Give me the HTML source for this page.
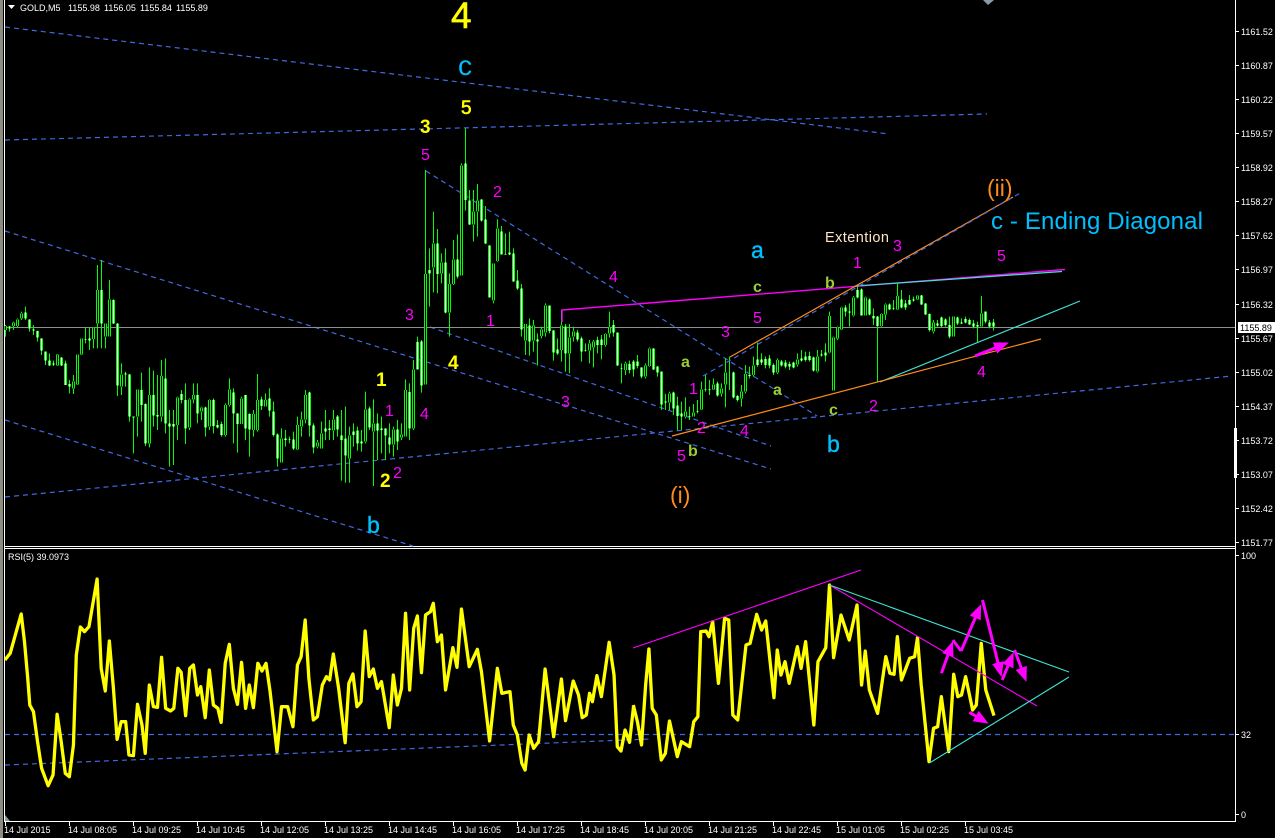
<!DOCTYPE html>
<html><head><meta charset="utf-8"><title>GOLD,M5</title>
<style>
html,body{margin:0;padding:0;background:#000;width:1275px;height:838px;overflow:hidden}
svg{display:block;position:absolute;left:0;top:0}
text{font-family:"Liberation Sans",sans-serif}
.a{font-size:9px;fill:#fff}
.m text{font-size:16px;fill:#f0f}
.y text{font-size:19px;font-weight:bold;fill:#ff0}
.o text{font-size:16px;font-weight:bold;fill:#9acd32}
.c text{font-size:23px;fill:#00bfff;stroke:#00bfff;stroke-width:.4}
.w{fill:none;stroke:#0f0;stroke-width:1}
.b3{fill:none;stroke-width:3}
.b1{fill:none;stroke-width:1}
</style></head><body>
<svg width="1275" height="838" viewBox="0 0 1275 838" xmlns="http://www.w3.org/2000/svg">
<defs>
<marker id="h" markerWidth="5" markerHeight="4" refX="3.6" refY="2" orient="auto"><path d="M0 0L5 2L0 4z" fill="#f0f"/></marker>
<path id="w1" d="M9 260V266M25 217V235M29 238V265M33 268V272M37 273V293M41 295V332M45 335V362M49 362V376M53 370V374M61 352V376M65 370V435M69 432V440M85 297V299M89 295V302M101 150V250M113 180V250M117 250V437M125 400V403M129 403V530M133 530V532M141 450V495M145 492V610M153 465V527M157 525V530M165 415V550M169 550V560M173 552V560M181 462V480M185 480V565M197 465V520M205 502V562M213 480V558M217 555V562M221 552V585M233 457V520M237 520V552M245 465V565M249 522V568M261 478V498M269 475V512M273 515V585M277 583V655M285 595V600M289 598V600M293 598V626M309 457V556M313 556V622M325 565V575M329 565V570M337 530V568M341 586V600M345 596V646M353 575V585M357 572V610M361 604V610M369 505V562M377 550V572M381 565V570M385 565V586M389 592V614M397 568V605M409 456V565M417 306V388M421 304V436"/>
<path id="b1" d="M5 258V270M13 248V258M17 238V258M21 220V235M57 344V376M73 424V445M77 343V433M81 295V343M93 263V297M97 150V250M105 250V290M109 178V290M121 403V440M137 448V530M149 465V610M161 408V530M177 472V555M189 478V563M193 465V478M201 502V515M209 480V560M225 495V585M229 448V495M241 475V552M253 522V570M257 480V570M265 480V500M281 595V668M297 555V628M301 538V560M305 465V538M317 607V620M321 580V625M333 538V572M349 586V655M365 508V605M373 550V575M393 568V614M401 584V592M405 450V590M413 388V565"/>
<path id="w2" d="M429 450V460M437 370V462M445 427V578M457 418V470M465 130V240M469 242V313M481 238V302M485 298V370M489 376V532M501 334V403M505 402V404M509 398V404M513 400V485M517 482V505M521 505V628M529 617V665M537 658V664M549 557V633M553 632V697M557 688V700M565 620V700M577 638V658M581 655V695M585 690V692M597 660V675M601 658V675M613 615V638M617 638V737M621 745V747M629 732V750M633 725V748M637 725V738M641 742V770M653 685V748M657 740V757M661 755V853M665 845V848M673 818V865M677 857V888M681 880V890M689 888V890M697 873V875M705 808V810M709 808V810M717 790V826M729 757V758M733 757V832M737 828V838"/>
<path id="b2" d="M425 462V793M433 370V443M441 427V460M449 492V578M453 418V492M461 136V467M473 275V314M477 242V275M493 430V542M497 325V423M525 612V662M533 617V662M541 628V648M545 556V638M561 616V690M569 652V700M573 634V650M589 670V692M593 665V682M605 642V675M609 622V640M625 730V750M645 737V770M649 685V738M669 820V848M685 875V890M693 878V890M701 808V868M713 793V808M721 805V820M725 757V793"/>
<path id="w3" d="M737 680V690M749 615V618M757 568V585M761 568V578M765 567V585M769 565V586M773 585V608M781 575V586M785 578V590M789 582V590M793 578V592M801 565V572M805 560V570M809 558V570M813 562V602M821 553V556M825 548V556M845 412V425M849 425V428M857 360V382M861 358V436M869 388V434M873 438V445M877 440V468M889 403V418M893 415V417M901 388V412M905 400V412M909 390V403M913 388V392M921 376V403M925 400V433M929 432V480M937 460V467M941 442V468M945 448V465M949 465V500M957 442V460M961 457V460M965 447V458M969 450V463M973 460V470M977 465V470M985 425V455M989 457V470M993 457V470"/>
<path id="b3" d="M741 665V685M745 612V665M753 586V615M777 570V608M797 568V584M817 560V605M829 438V548M833 502V662M837 472V505M841 412V478M853 382V437M865 382V436M881 432V468M885 403V433M897 378V418M917 376V388M933 458V485M953 440V500M981 430V470"/>
</defs>

<!-- frame -->
<rect x="0" y="0" width="3" height="838" fill="#8c8c80"/>
<g shape-rendering="crispEdges">
<rect x="4" y="0" width="1" height="822" fill="#fff"/>
<rect x="4" y="546" width="1231" height="1" fill="#fff"/>
<rect x="4" y="548" width="1231" height="1" fill="#fff"/>
<rect x="4" y="821" width="1232" height="1" fill="#fff"/>
<rect x="1235" y="0" width="1" height="822" fill="#fff"/>
<rect x="1234" y="428" width="3" height="50" fill="#fff"/>
<path d="M1236 31.5h3M1236 65.5h3M1236 99.5h3M1236 133.5h3M1236 167.5h3M1236 201.5h3M1236 235.5h3M1236 269.5h3M1236 304.5h3M1236 338.5h3M1236 372.5h3M1236 406.5h3M1236 440.5h3M1236 474.5h3M1236 508.5h3M1236 542.5h3M1236 555.5h3M1236 734.5h3M1236 814.5h3" stroke="#fff" fill="none"/>
<path d="M5.5 822v4M69.5 822v4M133.5 822v4M197.5 822v4M261.5 822v4M325.5 822v4M389.5 822v4M453.5 822v4M517.5 822v4M581.5 822v4M645.5 822v4M709.5 822v4M773.5 822v4M837.5 822v4M901.5 822v4M965.5 822v4" stroke="#fff" fill="none"/>
</g>
<path d="M5 815L10 821H5z" fill="#8a9aa0"/>
<path d="M983 0L988 5L994 0z" fill="#8a9aa8"/>

<!-- blue trend lines -->
<g fill="none" stroke="#4169e1" stroke-width="1.2" stroke-dasharray="5 4">
<path d="M5 27L889 134"/>
<path d="M5 140L987 114"/>
<path d="M5 231L771 469"/>
<path d="M5 420L413 546"/>
<path d="M5 497L1232 376"/>
<path d="M430 327L771 446"/>
<path d="M426 171L817 416"/>
</g>

<!-- bid line -->
<rect x="5" y="327" width="1230" height="1" fill="#8f8f8f" shape-rendering="crispEdges"/>

<!-- candles -->
<g shape-rendering="crispEdges">
<g transform="translate(.5,240) scale(1,.33333)">
<path class="w" d="M5 255V290M9 258V275M13 245V270M17 235V262M21 215V240M25 200V240M29 238V275M33 255V285M37 272V305M41 295V345M45 335V375M49 340V378M53 362V378M57 342V378M61 352V378M65 362V435M69 420V460M73 405V462M77 345V435M81 295V345M85 263V310M89 262V330M93 262V325M97 75V325M101 60V325M105 250V325M109 120V290M113 178V252M117 250V468M121 370V465M125 395V440M129 402V545M133 530V640M137 448V590M141 398V545M145 490V618M149 382V622M153 392V560M157 405V570M161 360V545M165 355V580M169 510V680M173 510V675M177 470V600M181 450V490M185 430V612M189 475V570M193 430V490M197 430V550M201 500V540M205 500V590M209 478V570M213 475V580M217 540V565M221 545V590M225 490V590M229 415V500M233 445V610M237 520V638M241 470V550M245 465V600M249 520V650M253 510V590M257 402V575M261 470V510M265 460V500M269 445V530M273 485V590M277 580V680M281 565V668M285 570V620M289 590V610M293 575V630M297 530V630M301 515V590M305 450V550M309 455V590M313 550V640M317 600V625M321 545V625M325 510V600M329 540V600M333 510V600M337 525V590M341 510V722M345 500V728M349 560V728M353 550V620M357 560V632M361 570V635M365 455V610M369 500V570M373 478V738M377 520V660M381 530V640M385 565V660M389 550V640M393 560V650M397 540V630M401 550V600M405 418V590M409 430V600M413 360V570M417 290V375M421 300V458"/>
<use href="#w1" class="b3" stroke="#0f0"/><use href="#b1" class="b3" stroke="#0f0"/>
<use href="#w1" class="b1" stroke="#fff"/><use href="#b1" class="b1" stroke="#000"/>
</g>
<g transform="translate(.5,120) scale(1,.33333)">
<path class="w" d="M425 150V793M429 385V560M433 275V517M437 327V520M441 400V490M445 385V580M449 460V650M453 360V495M457 343V475M461 130V467M465 25V272M469 210V315M473 210V365M477 192V350M481 238V305M485 258V372M489 376V532M493 430V550M497 298V425M501 318V403M505 340V404M509 335V405M513 385V485M517 450V510M521 492V650M525 612V705M529 595V707M533 600V695M537 640V737M541 620V655M545 550V650M549 557V640M553 630V722M557 655V705M561 570V725M565 612V755M569 612V760M573 620V665M577 630V665M581 650V725M585 670V695M589 660V730M593 660V742M597 650V700M601 645V718M605 640V680M609 575V653M613 600V650M617 638V737M621 730V790M625 725V765M629 722V760M633 720V770M637 705V745M641 742V775M645 730V775M649 682V740M653 685V750M657 738V770M661 755V870M665 822V870M669 815V870M673 815V885M677 830V930M681 845V930M685 832V895M689 860V900M693 852V890M697 840V880M701 785V870M705 762V815M709 780V825M713 775V810M717 785V830M721 790V830M725 715V862M729 710V810M733 755V835M737 825V845"/>
<use href="#w2" class="b3" stroke="#0f0"/><use href="#b2" class="b3" stroke="#0f0"/>
<use href="#w2" class="b1" stroke="#fff"/><use href="#b2" class="b1" stroke="#000"/>
</g>
<g transform="translate(.5,170) scale(1,.33333)">
<path class="w" d="M741 645V710M745 585V670M749 590V625M753 560V620M757 518V590M761 550V585M765 560V595M769 555V595M773 580V615M777 565V612M781 570V590M785 570V595M789 575V600M793 575V595M797 550V590M801 540V575M805 545V575M809 545V575M813 560V605M817 540V608M821 540V560M825 520V575M829 425V550M833 500V662M837 470V510M841 410V480M845 405V440M849 400V470M853 378V440M857 345V385M861 355V436M865 380V436M869 385V436M873 415V465M877 438V635M881 430V470M885 400V450M889 400V420M893 390V420M897 340V420M901 360V415M905 390V420M909 375V405M913 380V395M917 375V390M921 375V405M925 400V435M929 430V485M933 450V490M937 450V470M941 440V472M945 445V470M949 440V505M953 440V500M957 440V465M961 445V462M965 440V460M969 445V465M973 450V475M977 455V518M981 378V472M985 425V460M989 450V475M993 447V482"/>
<use href="#w3" class="b3" stroke="#0f0"/><use href="#b3" class="b3" stroke="#0f0"/>
<use href="#w3" class="b1" stroke="#fff"/><use href="#b3" class="b1" stroke="#000"/>
</g>
</g>

<!-- main chart overlays -->
<g fill="none" stroke-width="1.2">
<path d="M562 322V310L1065 269.5" stroke="#f0f" stroke-width="1.4"/>
<path d="M855 286L1062 271.5" stroke="#40e0d0"/>
<path d="M880 382L1080 301" stroke="#40e0d0"/>
<path d="M672 436L1041 339" stroke="#ff8c1a"/>
<path d="M730 357L1013 197" stroke="#ff8c1a"/>
<path d="M703 376L1022 192" stroke="#4169e1" stroke-dasharray="5 4"/>
<path d="M975 356L1005 344" stroke="#f0f" stroke-width="3" marker-end="url(#h)"/>
</g>

<!-- RSI -->
<g fill="none" stroke-width="1.2">
<path d="M5 734.5H1235" stroke="#4169e1" stroke-dasharray="5 4"/>
<path d="M5 765L650 739" stroke="#4169e1" stroke-dasharray="5 4"/>
</g>
<g fill="none" stroke="#ff0" stroke-linejoin="round">
<polyline vector-effect="non-scaling-stroke" stroke-width="3.3" transform="translate(0,545) scale(.408,.33333)" points="12,345 25,325 38,268 52,207 60,290 68,400 73,480 82,500 92,590 102,670 118,722 130,690 140,508 150,590 160,685 170,695 180,600 187,330 197,246 207,260 218,245 238,102 248,370 258,438 268,288 278,430 287,583 297,530 308,530 316,630 327,632 337,478 348,540 356,625 366,420 376,485 386,487 396,337 406,490 418,498 426,490 436,370 444,382 455,512 465,370 474,360 484,450 492,425 503,518 513,375 523,480 534,490 542,532 552,355 562,298 572,430 582,478 592,352 602,490 611,420 621,488 632,355 642,378 652,355 662,440 679,620 690,485 705,485 718,545 729,360 738,335 748,225 757,400 768,525 778,515 790,420 800,395 808,405 817,327 830,430 846,593 855,415 865,387 875,485 885,470 895,258 905,395 915,372 925,430 935,410 954,548 964,390 974,480 984,430 994,205 1004,435 1014,250 1023,213 1033,383 1043,210 1055,200 1062,175 1072,290 1082,270 1092,435 1110,308 1120,367 1131,192 1150,365 1170,313 1180,380 1200,588 1219,370 1230,445 1250,440 1258,540 1268,570 1279,655 1287,675 1297,570 1308,610 1320,590 1336,372 1357,575 1376,402 1386,527 1405,408 1418,450 1427,518 1437,510 1445,445 1452,470 1463,392 1474,455 1493,292 1505,390 1513,605 1522,618 1532,555 1543,592 1553,482"/>
<polyline vector-effect="non-scaling-stroke" stroke-width="3.3" transform="translate(630,545) scale(.4113,.33333)" points="8,480 18,530 28,600 38,420 46,312 54,490 64,510 76,645 86,625 96,528 115,635 125,590 145,605 155,530 165,515 172,260 185,258 192,275 201,230 215,415 230,220 240,225 250,510 262,525 282,300 292,295 308,208 320,255 330,228 350,458 358,315 367,390 377,350 387,415 407,305 416,370 427,290 447,540 457,350 476,308 485,120 495,338 513,210 533,285 552,180 563,420 572,318 582,435 602,505 622,335 632,385 642,388 650,275 660,405 680,340 692,335 699,278 708,420 727,650 738,550 748,545 757,455 775,620 787,388 797,455 806,450 816,395 833,495 842,480 854,295 865,435 885,512"/>
</g>
<g fill="none" stroke-width="1.1">
<path d="M633 648L861 570" stroke="#f0f"/>
<path d="M829.5 585L1037 706" stroke="#f0f"/>
<path d="M829.5 585L1069 672" stroke="#40e0d0"/>
<path d="M929.5 763L1069 677" stroke="#40e0d0"/>
</g>
<g fill="none" stroke="#f0f" stroke-width="3">
<path d="M941.4 673.3L951.5 645" marker-end="url(#h)"/>
<path d="M952.9 640L961.1 651"/>
<path d="M961.1 651L979.5 608" marker-end="url(#h)"/>
<path d="M982.5 600L1000.5 673" marker-end="url(#h)"/>
<path d="M1002.2 680L1012 656" marker-end="url(#h)"/>
<path d="M1014.6 650L1025 678" marker-end="url(#h)"/>
<path d="M969.3 712.3L985 721.5" marker-end="url(#h)"/>
</g>

<!-- header -->
<path d="M8 5H15L11.5 9z" fill="#fff"/>
<text class="a" x="20" y="11">GOLD,M5</text>
<text class="a" x="68" y="11">1155.98</text>
<text class="a" x="104" y="11">1156.05</text>
<text class="a" x="140" y="11">1155.84</text>
<text class="a" x="176" y="11">1155.89</text>
<text class="a" x="8" y="560">RSI(5) 39.0973</text>

<!-- price axis -->
<g class="a">
<text class="a" x="1241" y="35">1161.52</text>
<text class="a" x="1241" y="69">1160.87</text>
<text class="a" x="1241" y="103">1160.22</text>
<text class="a" x="1241" y="137">1159.57</text>
<text class="a" x="1241" y="171">1158.92</text>
<text class="a" x="1241" y="205">1158.27</text>
<text class="a" x="1241" y="239">1157.62</text>
<text class="a" x="1241" y="273">1156.97</text>
<text class="a" x="1241" y="308">1156.32</text>
<text class="a" x="1241" y="342">1155.67</text>
<text class="a" x="1241" y="376">1155.02</text>
<text class="a" x="1241" y="410">1154.37</text>
<text class="a" x="1241" y="444">1153.72</text>
<text class="a" x="1241" y="478">1153.07</text>
<text class="a" x="1241" y="512">1152.42</text>
<text class="a" x="1241" y="546">1151.77</text>
<text class="a" x="1241" y="559">100</text>
<text class="a" x="1241" y="738">32</text>
<text class="a" x="1241" y="818">0</text>
</g>
<rect x="1238" y="322" width="37" height="11" fill="#fff"/>
<text x="1240" y="331" font-size="9" fill="#000">1155.89</text>

<!-- time axis -->
<g>
<text class="a" x="4" y="833">14 Jul 2015</text>
<text class="a" x="68" y="833">14 Jul 08:05</text>
<text class="a" x="132" y="833">14 Jul 09:25</text>
<text class="a" x="196" y="833">14 Jul 10:45</text>
<text class="a" x="260" y="833">14 Jul 12:05</text>
<text class="a" x="324" y="833">14 Jul 13:25</text>
<text class="a" x="388" y="833">14 Jul 14:45</text>
<text class="a" x="452" y="833">14 Jul 16:05</text>
<text class="a" x="516" y="833">14 Jul 17:25</text>
<text class="a" x="580" y="833">14 Jul 18:45</text>
<text class="a" x="644" y="833">14 Jul 20:05</text>
<text class="a" x="708" y="833">14 Jul 21:25</text>
<text class="a" x="772" y="833">14 Jul 22:45</text>
<text class="a" x="836" y="833">15 Jul 01:05</text>
<text class="a" x="900" y="833">15 Jul 02:25</text>
<text class="a" x="964" y="833">15 Jul 03:45</text>
</g>

<!-- labels -->
<text x="451" y="28" font-size="37" fill="#ff0" stroke="#ff0" stroke-width=".6">4</text>
<g class="y">
<text x="461" y="114" font-weight="normal" style="font-weight:normal" stroke="#ff0" stroke-width=".6">5</text>
<text x="420" y="133">3</text>
<text x="376" y="386">1</text>
<text x="380" y="487">2</text>
<text x="448" y="369">4</text>
</g>
<text x="458" y="75" font-size="28" fill="#00bfff">c</text>
<g class="c">
<text x="751" y="258">a</text>
<text x="827" y="452">b</text>
<text x="367" y="533">b</text>
</g>
<text x="991" y="229" font-size="24" fill="#00bfff" textLength="212">c - Ending Diagonal</text>
<text x="987" y="196" font-size="23" fill="#ff8c1a">(ii)</text>
<text x="670" y="503" font-size="23" fill="#ff8c1a">(i)</text>
<text x="825" y="242" font-size="14.5" fill="#ffe4c4" textLength="64">Extention</text>
<g class="m">
<text x="421" y="160">5</text>
<text x="493" y="197">2</text>
<text x="609" y="282">4</text>
<text x="486" y="326">1</text>
<text x="405" y="320">3</text>
<text x="385" y="416">1</text>
<text x="393" y="478">2</text>
<text x="420" y="419">4</text>
<text x="561" y="407">3</text>
<text x="721" y="337">3</text>
<text x="689" y="394">1</text>
<text x="697" y="433">2</text>
<text x="677" y="461">5</text>
<text x="740" y="436">4</text>
<text x="753" y="323">5</text>
<text x="853" y="268">1</text>
<text x="893" y="251">3</text>
<text x="997" y="261">5</text>
<text x="869" y="411">2</text>
<text x="977" y="377">4</text>
</g>
<g class="o">
<text x="681" y="367">a</text>
<text x="688" y="456">b</text>
<text x="825" y="288">b</text>
<text x="753" y="292">c</text>
<text x="773" y="395">a</text>
<text x="829" y="415">c</text>
</g>
</svg>
</body></html>
